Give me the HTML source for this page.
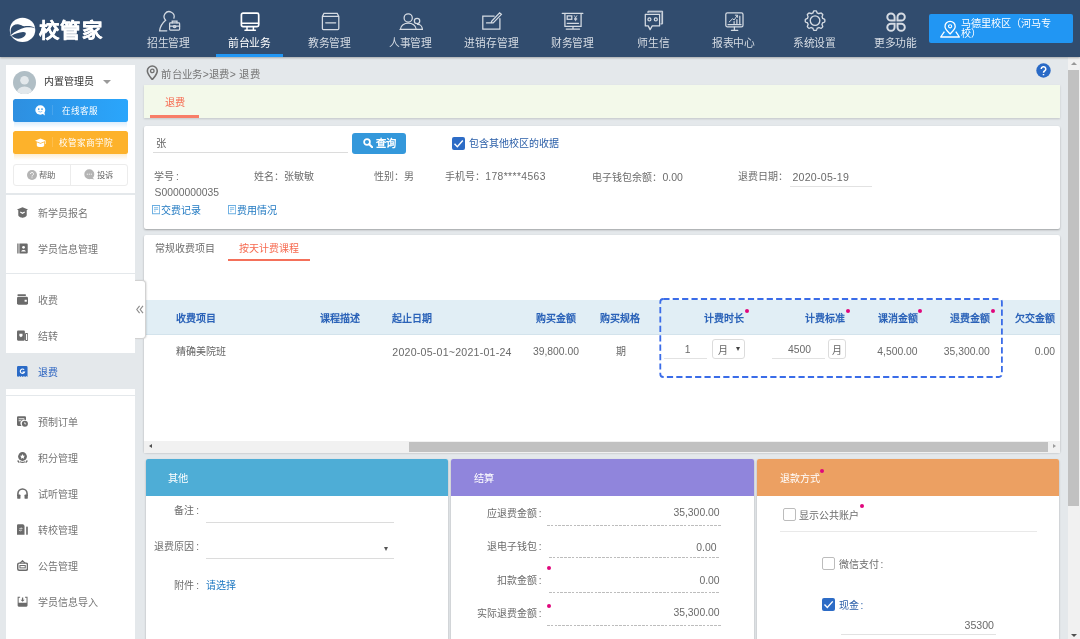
<!DOCTYPE html>
<html lang="zh-CN">
<head>
<meta charset="utf-8">
<title>退费</title>
<style>
*{box-sizing:border-box;margin:0;padding:0}
html,body{width:1080px;height:639px;overflow:hidden}
body{font-family:"Liberation Sans",sans-serif;background:#e4e8eb;color:#555;font-size:10.5px;position:relative}
#wrap{position:absolute;left:0;top:0;width:1080px;height:639px;overflow:hidden;will-change:transform}
.abs{position:absolute}
i{font-style:normal;margin-left:1.8px}
/* ---------- top nav ---------- */
#nav{position:absolute;left:0;top:0;width:1080px;height:57px;background:#314c6e;box-shadow:0 1px 2px rgba(0,0,0,.28);z-index:3}
#logo-txt{position:absolute;left:38.8px;top:15.8px;font-size:20.4px;line-height:30px;font-weight:bold;color:#fff;letter-spacing:1.6px;-webkit-text-stroke:0.35px #fff}
.ni{position:absolute;top:0;width:67px;height:57px;text-align:center;color:#d5dbe3;font-size:10.8px}
.ni svg{position:absolute;left:50%;top:9px;margin-left:-12px;width:24px;height:24px;fill:none;stroke:#d5dbe3;stroke-width:1.25;stroke-linecap:round}
.ni span{position:absolute;left:-10px;right:-10px;top:36.7px;line-height:13px;white-space:nowrap;letter-spacing:-.2px}
.ni.on{color:#fff;border-bottom:3px solid #2196f3}
.ni.on svg{stroke:#fff}
#campus{position:absolute;left:928.7px;top:14px;width:144px;height:29px;background:#2196f3;color:#fff;font-size:10.1px;line-height:10.3px;border-radius:2px}
#campus span{position:absolute;left:32.2px;top:5px;width:100px}
/* ---------- sidebar ---------- */
#side{position:absolute;left:6px;top:65px;width:129px;height:580px;background:#fff}
.sb{position:absolute;left:7px;width:115px;height:23px;color:#fff;font-size:8.6px;line-height:23px;border-radius:2.5px;white-space:nowrap}
.mi{position:absolute;left:0;width:129px;height:36px;line-height:37.6px;font-size:10px;color:#757575;padding-left:32px;white-space:nowrap}
.mi svg{position:absolute;left:11px;top:11.7px;width:11px;height:11px;fill:currentColor;color:#6b6b6b}
.mi.on{color:#2a62c0}
.mi.on svg{color:#2a6ac6}
.sep{position:absolute;left:0;width:129px;height:1px;background:#e4e8eb}
/* ---------- main ---------- */
.card{position:absolute;background:#fff;box-shadow:0 1px 2px rgba(0,0,0,.3);border-radius:2px}
.lbl{position:absolute;white-space:nowrap;font-size:10px;line-height:14px;color:#6c6c6c}
.th{position:absolute;white-space:nowrap;font-size:10px;line-height:14px;color:#2a62b8;font-weight:bold}
.td{position:absolute;white-space:nowrap;font-size:10.35px;line-height:14px;color:#6a6a6a}
.dot{position:absolute;width:4px;height:4px;border-radius:50%;background:#e0067c}
.ph{position:absolute;left:0;top:0;right:0;height:37px;border-radius:2px 2px 0 0;color:#fff;font-size:10.5px;line-height:37px;padding-left:23px}
.ul{position:absolute;height:1px;background:#ddd}
.dl{position:absolute;height:1px;background:repeating-linear-gradient(90deg,#bdbdbd 0,#bdbdbd 2.6px,transparent 2.6px,transparent 3.8px)}
.cb{position:absolute;width:12px;height:12px;border:1.3px solid #bcbcbc;border-radius:2px;background:#fff}
.cb.on{background:#2d6cc6;border:0}
.cb.on svg{position:absolute;left:0;top:0;width:100%;height:100%}
</style>
</head>
<body>
<div id="wrap">
<!-- NAV -->
<div id="nav">
  <svg class="abs" style="left:6px;top:14px" width="34" height="32" viewBox="0 0 679 639"><ellipse cx="330" cy="318" rx="255" ry="243" fill="#fff"/><path d="M70,440L118,408L126,424Z" fill="#fff"/><path d="M97,300C115,245 170,203 240,206C300,210 325,247 365,246C430,238 530,238 592,288C540,264 440,258 380,272C280,296 175,358 97,420C92,380 90,340 97,300Z" fill="#314c6e"/><path d="M108,432C180,396 260,370 340,360C380,358 400,375 396,400C385,445 320,492 250,495C190,492 140,462 108,432Z" fill="#314c6e"/></svg>
  <div id="logo-txt">校管家</div>
  <div class="ni" style="left:135px"><svg viewBox="0 0 24 24"><path d="M16.9,9.2A5,5 0 1 0 8.6,11.2C6.5,13 3.2,16.5 2.6,21.8H9.8"/><rect x="12.6" y="13.9" width="10" height="7.2" rx="0.8"/><path d="M15.2,13.9V12.2H20V13.9M12.6,17.1H22.6"/><ellipse cx="17.6" cy="17.5" rx="1.4" ry="1"/></svg><span>招生管理</span></div>
  <div class="ni on" style="left:216px"><svg viewBox="0 0 24 24"><rect x="3.4" y="4.1" width="17.3" height="13.6" rx="1.6" stroke-width="1.7"/><path d="M3.6,14.3H20.6M9,18V21.2M15.4,18V21.2M7,21.3H17.4" stroke-width="1.5"/></svg><span>前台业务</span></div>
  <div class="ni" style="left:296px"><svg viewBox="0 0 24 24"><path d="M4.4,7.4L6,4.3H19.2L20.8,7.4V19.6A1,1 0 0 1 19.8,20.6H5.4A1,1 0 0 1 4.4,19.6ZM4.4,7.4H20.8M7.7,13.8H17.7"/></svg><span>教务管理</span></div>
  <div class="ni" style="left:377px"><svg viewBox="0 0 24 24"><circle cx="9.2" cy="8.9" r="4.1"/><path d="M1.4,20.3C1.8,12.2 16.8,12.2 17.2,20.3M1,20.4H23.6M23.4,20.3C23.2,17.2 21,15.3 18.6,15.4"/><circle cx="18.05" cy="12" r="2.7"/></svg><span>人事管理</span></div>
  <div class="ni" style="left:458px"><svg viewBox="0 0 24 24"><path d="M14.2,7.1H2.8V20.1H19.9V9.6"/><path d="M6.5,13.9H13.2L21.4,5.4L19.6,3.8L11.6,12.4L11.2,14"/></svg><span>进销存管理</span></div>
  <div class="ni" style="left:539px"><svg viewBox="0 0 24 24"><path d="M1.2,4.3H21.9M3.9,4.5V17.4H20.1V4.5M12,17.6V20M5.2,20.1H18.6M6.2,14.3H17.5"/><rect x="6.2" y="6.9" width="4.6" height="3.4"/><path d="M13.3,6.6L14.6,8.8L15.9,6.6M14.6,8.8V11.8M13.4,9.4H15.8M13.4,10.6H15.8" stroke-width="0.8"/></svg><span>财务管理</span></div>
  <div class="ni" style="left:620px"><svg viewBox="0 0 24 24"><path d="M3.3,5.3H17.6V16.9H10.2L8.1,20.6L6.2,16.9H3.3Z" stroke-linejoin="round"/><path d="M6,3.6V2.2H20.6V14.9H18.9" stroke-width="1"/><path d="M6.2,2.9H19.8V14.6" stroke-width="1.6" opacity=".55"/><circle cx="7.4" cy="10.4" r="1.5"/><circle cx="13.8" cy="10.4" r="1.5"/></svg><span>师生信</span></div>
  <div class="ni" style="left:700px"><svg viewBox="0 0 24 24"><rect x="3.8" y="3.9" width="17.2" height="14" rx="1.6"/><path d="M12.4,18V21M9.4,21.3H15.8M6,15.7H19"/><path d="M12.1,12.7V14.6M14.9,10.5V14.6M17.8,7.2V14.6" stroke-width="1.2"/><path d="M7.2,13L10.5,9.8L12.2,10.9L15.3,6.5M13.3,6.2H15.6V8.4" stroke-width="1"/></svg><span>报表中心</span></div>
  <div class="ni" style="left:781px"><svg viewBox="0 0 24 24"><path d="M12.05,1.80L12.43,1.81L12.82,1.83L13.20,1.87L13.51,2.37L13.78,2.92L14.00,3.48L14.19,4.00L14.49,4.09L14.78,4.19L15.07,4.30L15.36,4.43L15.64,4.56L15.91,4.71L16.41,4.48L16.97,4.24L17.55,4.04L18.12,3.90L18.41,4.15L18.70,4.40L18.98,4.67L19.25,4.95L19.50,5.24L19.75,5.53L19.61,6.10L19.41,6.68L19.17,7.24L18.94,7.74L19.09,8.01L19.22,8.29L19.35,8.58L19.46,8.87L19.56,9.16L19.65,9.46L20.17,9.65L20.73,9.87L21.28,10.14L21.78,10.45L21.82,10.83L21.84,11.22L21.85,11.60L21.84,11.98L21.82,12.37L21.78,12.75L21.28,13.06L20.73,13.33L20.17,13.55L19.65,13.74L19.56,14.04L19.46,14.33L19.35,14.62L19.22,14.91L19.09,15.19L18.94,15.46L19.17,15.96L19.41,16.52L19.61,17.10L19.75,17.67L19.50,17.96L19.25,18.25L18.98,18.53L18.70,18.80L18.41,19.05L18.12,19.30L17.55,19.16L16.97,18.96L16.41,18.72L15.91,18.49L15.64,18.64L15.36,18.77L15.07,18.90L14.78,19.01L14.49,19.11L14.19,19.20L14.00,19.72L13.78,20.28L13.51,20.83L13.20,21.33L12.82,21.37L12.43,21.39L12.05,21.40L11.67,21.39L11.28,21.37L10.90,21.33L10.59,20.83L10.32,20.28L10.10,19.72L9.91,19.20L9.61,19.11L9.32,19.01L9.03,18.90L8.74,18.77L8.46,18.64L8.19,18.49L7.69,18.72L7.13,18.96L6.55,19.16L5.98,19.30L5.69,19.05L5.40,18.80L5.12,18.53L4.85,18.25L4.60,17.96L4.35,17.67L4.49,17.10L4.69,16.52L4.93,15.96L5.16,15.46L5.01,15.19L4.88,14.91L4.75,14.62L4.64,14.33L4.54,14.04L4.45,13.74L3.93,13.55L3.37,13.33L2.82,13.06L2.32,12.75L2.28,12.37L2.26,11.98L2.25,11.60L2.26,11.22L2.28,10.83L2.32,10.45L2.82,10.14L3.37,9.87L3.93,9.65L4.45,9.46L4.54,9.16L4.64,8.87L4.75,8.58L4.88,8.29L5.01,8.01L5.16,7.74L4.93,7.24L4.69,6.68L4.49,6.10L4.35,5.53L4.60,5.24L4.85,4.95L5.12,4.67L5.40,4.40L5.69,4.15L5.98,3.90L6.55,4.04L7.13,4.24L7.69,4.48L8.19,4.71L8.46,4.56L8.74,4.43L9.03,4.30L9.32,4.19L9.61,4.09L9.91,4.00L10.10,3.48L10.32,2.92L10.59,2.37L10.90,1.87L11.28,1.83L11.67,1.81Z" stroke-linejoin="round" stroke-width="1.35"/><circle cx="12.05" cy="11.6" r="4.8" stroke-width="1.35"/></svg><span>系统设置</span></div>
  <div class="ni" style="left:862px"><svg viewBox="0 0 24 24"><path d="M10.6,11.55H6.95A3.65,3.55 0 1 1 10.6,8ZM13.5,11.55V8A3.65,3.55 0 1 1 17.15,11.55ZM10.6,14.7V18.25A3.65,3.55 0 1 1 6.95,14.7ZM13.5,14.7H17.15A3.65,3.55 0 1 1 13.5,18.25Z" stroke-width="2" stroke-linejoin="miter"/></svg><span>更多功能</span></div>
  <div id="campus"><svg class="abs" style="left:10px;top:5.5px" width="22" height="19" viewBox="0 0 22 19"><path d="M11.1,1.3A5.1,5.1 0 0 1 16.2,6.4C16.2,9.4 12.6,12.2 11.1,13.9C9.6,12.2 6,9.4 6,6.4A5.1,5.1 0 0 1 11.1,1.3Z" fill="none" stroke="#fff" stroke-width="1.3"/><circle cx="11.1" cy="6.3" r="1.6" fill="none" stroke="#fff" stroke-width="1.1"/><path d="M5.4,11.6L1.7,17H20.4L16.8,11.6" fill="none" stroke="#fff" stroke-width="1.3" stroke-linejoin="round"/></svg><span>马德里校区（河马专校）</span></div>
</div>

<!-- SIDEBAR -->
<div id="side">
  <svg class="abs" style="left:7px;top:5.5px" width="23" height="23" viewBox="0 0 23 23"><defs><clipPath id="av"><circle cx="11.5" cy="11.5" r="11.5"/></clipPath></defs><circle cx="11.5" cy="11.5" r="11.5" fill="#b0bec5"/><g clip-path="url(#av)"><circle cx="11.5" cy="9.2" r="4.3" fill="#e3e8eb"/><ellipse cx="11.5" cy="21.5" rx="7.6" ry="6" fill="#e3e8eb"/></g></svg>
  <div class="abs" style="left:38px;top:10px;font-size:10px;line-height:14px;color:#333">内置管理员</div>
  <div class="abs" style="left:97px;top:15px;width:0;height:0;border-left:4.3px solid transparent;border-right:4.3px solid transparent;border-top:4.6px solid #9a9a9a"></div>
  <div class="abs" style="left:8px;top:55px;width:113px;height:8px;background:linear-gradient(#cfe7fb,#fff)"></div>
  <div class="sb" style="top:34px;background:linear-gradient(90deg,#2e8fe0,#2aa6fc)">
    <svg class="abs" style="left:21.6px;top:5.8px" width="11" height="11" viewBox="0 0 11 11"><ellipse cx="5.3" cy="5" rx="5" ry="4.7" fill="#fff"/><path d="M7.2,8.6L9.9,10.5L9.4,7.2Z" fill="#fff"/><circle cx="3.7" cy="4.1" r="0.85" fill="#2d97ea"/><circle cx="7" cy="4.1" r="0.85" fill="#2d97ea"/><path d="M3.4,6.3Q5.3,7.8 7.3,6.3" fill="none" stroke="#2d97ea" stroke-width="0.55"/></svg>
    <div class="abs" style="left:39px;top:6px;width:1px;height:10px;background:rgba(255,255,255,.13)"></div>
    <span class="abs" style="left:49.3px;top:0.7px">在线客服</span>
  </div>
  <div class="abs" style="left:8px;top:87px;width:113px;height:8px;background:linear-gradient(#fde7c0,#fff)"></div>
  <div class="sb" style="top:66px;background:#fdb22b">
    <svg class="abs" style="left:22px;top:6.5px" width="11" height="10" viewBox="0 0 11 10"><path d="M0,2.7L5.5,0.4L11,2.7L5.5,5Z" fill="#fff"/><path d="M1.8,4.2V7.4C1.8,9.6 9.2,9.6 9.2,7.4V4.2L5.5,5.8Z" fill="#fff"/><path d="M10.4,3V6" stroke="#fff" stroke-width="0.7"/></svg>
    <div class="abs" style="left:39px;top:6px;width:1px;height:10px;background:rgba(255,255,255,.16)"></div>
    <span class="abs" style="left:46px;top:0.6px">校管家商学院</span>
  </div>
  <div class="abs" style="left:7px;top:99px;width:115px;height:22px;border:1px solid #ececec;border-radius:3px;font-size:8.4px;line-height:20px;color:#666">
    <div class="abs" style="left:55.6px;top:0;width:1px;height:20px;background:#ececec"></div>
    <svg class="abs" style="left:12.6px;top:4.8px" width="10" height="10" viewBox="0 0 10 10"><circle cx="5" cy="5" r="5" fill="#b4b4b4"/><path d="M3.5,4A1.5,1.5 0 1 1 5.6,5.3C5.1,5.6 5,5.9 5,6.5M5,7.4V8.2" fill="none" stroke="#fff" stroke-width="0.9"/></svg>
    <span class="abs" style="left:25.4px;top:0.3px">帮助</span>
    <svg class="abs" style="left:69.6px;top:4.3px" width="11" height="11" viewBox="0 0 11 11"><path d="M5.3,0.2A5,5 0 1 1 5.3,10.2A5,5 0 0 1 5.3,0.2ZM8.4,8.4L10.4,10.6L7,9.8Z" fill="#b4b4b4"/><path d="M2.8,5.2H3.8M4.8,5.2H5.8M6.8,5.2H7.8" stroke="#fff" stroke-width="1"/></svg>
    <span class="abs" style="left:83.2px;top:0.3px">投诉</span>
  </div>
  <div class="sep" style="top:128px;height:2px"></div>
  <div class="abs" style="left:0;top:288.2px;width:129px;height:36px;background:#e4e8eb"></div>
  <div class="mi" style="top:130px"><svg viewBox="0 0 12 12"><path d="M0,2.7L6,0.3L12,2.7L10.6,3.5V9C10.6,10.6 7,11.8 6,11.8C5,11.8 1.4,10.6 1.4,9V3.5Z"/><path d="M3.6,5.4L6,6.9L8.4,5.4" fill="none" stroke="#fff" stroke-width="1.2"/></svg>新学员报名</div>
  <div class="mi" style="top:166px"><svg viewBox="0 0 12 12"><path d="M0.3,0.5H1.7V11.5H0.3ZM2.6,0.5H10.6A1.1,1.1 0 0 1 11.7,1.6V10.4A1.1,1.1 0 0 1 10.6,11.5H2.6Z"/><circle cx="7.1" cy="4.7" r="1.5" fill="#fff"/><path d="M4.5,9.3C4.5,6.9 9.7,6.9 9.7,9.3Z" fill="#fff"/></svg>学员信息管理</div>
  <div class="mi" style="top:217px"><svg viewBox="0 0 12 12"><rect x="0.4" y="0.4" width="9.4" height="1.7" rx="0.8"/><rect x="0" y="3.1" width="12" height="8.6" rx="1.6"/><rect x="8.3" y="6.3" width="2.4" height="2.1" fill="#fff"/></svg>收费</div>
  <div class="mi" style="top:253px"><svg viewBox="0 0 12 12"><rect x="0" y="0.6" width="8.6" height="11" rx="1.2"/><path d="M2.6,4.2H6V6.6L4.3,8L2.6,6.6Z" fill="#fff"/><rect x="9.2" y="3.8" width="2.5" height="7.6" rx="0.8" fill="none" stroke="currentColor" stroke-width="1.1"/></svg>结转</div>
  <div class="mi on" style="top:289px"><svg viewBox="0 0 12 12"><path d="M1.4,0H10.1A1.4,1.4 0 0 1 11.5,1.4V12L10.2,11L8.9,12L7.6,11L6.3,12L5,11L3.7,12L2.4,11L1.2,12L0,11V1.4A1.4,1.4 0 0 1 1.4,0Z"/><path d="M7.8,4.1A2.4,2.4 0 1 0 8.2,6.6H6" fill="none" stroke="#fff" stroke-width="1.2"/></svg>退费</div>
  <div class="mi" style="top:339px"><svg viewBox="0 0 12 12"><path d="M1.2,0.2H8.6A1.2,1.2 0 0 1 9.8,1.4V4.5A4,4 0 0 0 5,10.8H1.2A1.2,1.2 0 0 1 0,9.6V1.4A1.2,1.2 0 0 1 1.2,0.2Z"/><path d="M1.8,3H8M1.8,5.2H4.6" stroke="#fff" stroke-width="1" fill="none"/><circle cx="8.6" cy="8.4" r="3.3"/><path d="M8.5,6.8V8.6H10" stroke="#fff" stroke-width="0.9" fill="none"/></svg>预制订单</div>
  <div class="mi" style="top:375px"><svg viewBox="0 0 12 12"><circle cx="6" cy="4.9" r="4.8"/><path d="M6,2.2L6.9,4L8.8,4.2L7.4,5.5L7.8,7.4L6,6.5L4.2,7.4L4.6,5.5L3.2,4.2L5.1,4Z" fill="#fff"/><path d="M0.7,9.3L2.5,11.5M11.3,9.3L9.5,11.5" fill="none" stroke="currentColor" stroke-width="1.4"/><path d="M3.2,10.7C5,11.5 7,11.5 8.8,10.7" fill="none" stroke="currentColor" stroke-width="1.1"/></svg>积分管理</div>
  <div class="mi" style="top:411px"><svg viewBox="0 0 12 12"><path d="M1,8.6V6A5,5 0 0 1 11,6V8.6" fill="none" stroke="currentColor" stroke-width="1.7"/><rect x="0.2" y="7" width="3.6" height="4.8" rx="1"/><rect x="8.2" y="7" width="3.6" height="4.8" rx="1"/></svg>试听管理</div>
  <div class="mi" style="top:447px"><svg viewBox="0 0 12 12"><path d="M1.2,0.4H6.8L8.2,1.8V11.8H0V1.6A1.2,1.2 0 0 1 1.2,0.4Z"/><path d="M2.6,5H5.6M2.6,6.8H5.6M4.6,3.8L5.8,5M3.6,8L2.4,6.8" stroke="#fff" stroke-width="0.7" fill="none"/><rect x="10" y="2.6" width="1.8" height="9.2" rx="0.7"/></svg>转校管理</div>
  <div class="mi" style="top:483px"><svg viewBox="0 0 12 12"><rect x="0.8" y="3.4" width="10.6" height="7.8" rx="1.6" fill="none" stroke="currentColor" stroke-width="1.6"/><path d="M3.2,3.4L6,0.8L8.8,3.4" fill="none" stroke="currentColor" stroke-width="1.3"/><rect x="3.2" y="6" width="5.8" height="2.6" fill="none" stroke="currentColor" stroke-width="1.1"/></svg>公告管理</div>
  <div class="mi" style="top:519px"><svg viewBox="0 0 12 12"><path d="M0.7,0.8H3.4V1.9H1.8V7.4H10.4V1.9H8.8V0.8H11.5V10.4A1.2,1.2 0 0 1 10.3,11.6H1.9A1.2,1.2 0 0 1 0.7,10.4Z"/><path d="M5.4,1.6H6.8V4H8.4L6.1,6.4L3.8,4H5.4Z"/></svg>学员信息导入</div>
  <div class="sep" style="top:208px"></div>
  <div class="sep" style="top:330px"></div>
</div>
<div class="abs" style="left:135px;top:280.3px;width:11px;height:59px;background:#fff;border-radius:0 4px 4px 0;border:1px solid #d2d2d2;border-left:0;box-shadow:1px 0 1.5px rgba(0,0,0,.1);z-index:5">
  <svg class="abs" style="left:1.2px;top:24px" width="8" height="9" viewBox="0 0 8 9"><path d="M3.6,0.8L0.8,4.5L3.6,8.2M7,0.8L4.2,4.5L7,8.2" fill="none" stroke="#8c8c8c" stroke-width="1.15"/></svg>
</div>

<!-- MAIN -->
<div id="main">
<svg class="abs" style="left:145.8px;top:64.6px" width="12.6" height="15.8" viewBox="0 0 12 15"><path d="M6,1A4.7,4.7 0 0 1 10.7,5.7C10.7,8.8 7.4,12 6,13.9C4.6,12 1.3,8.8 1.3,5.7A4.7,4.7 0 0 1 6,1Z" fill="none" stroke="#707070" stroke-width="1.5"/><circle cx="6" cy="5.6" r="1.7" fill="none" stroke="#707070" stroke-width="1.3"/></svg>
<div class="lbl" style="left:161.3px;top:67.9px;font-size:10.4px;color:#757575;letter-spacing:.35px">前台业务&gt;退费&gt; 退费</div>
<svg class="abs" style="left:1036.4px;top:63.3px" width="15" height="15" viewBox="0 0 15 15"><circle cx="7.5" cy="7.5" r="7.2" fill="#2a6ac6"/><path d="M5.2,6A2.3,2.3 0 1 1 8.6,8C7.8,8.5 7.5,8.9 7.5,9.7M7.5,11V12.3" fill="none" stroke="#fff" stroke-width="1.5"/></svg>
<div class="abs" style="left:144px;top:85px;width:916px;height:33px;background:#f3f9ea;box-shadow:0 1px 2px rgba(0,0,0,.15)"><div class="abs" style="left:6px;top:0;width:49px;height:33px;border-bottom:3px solid #f87e68;color:#f66a50;font-size:10.2px;line-height:35.2px;text-align:center">退费</div></div>
<div class="card" style="left:144px;top:125.5px;width:916px;height:103.5px"></div>
<div class="lbl" style="left:155.5px;top:137.2px;font-size:10.4px;color:#666">张</div>
<div class="ul" style="left:153px;top:151.5px;width:195px;background:#dcdcdc"></div>
<div class="abs" style="left:351.5px;top:132.6px;width:54.8px;height:21.8px;background:#3498db;border-radius:3px;color:#fff;font-weight:bold;font-size:10.3px;line-height:21.8px;white-space:nowrap"><svg class="abs" style="left:11px;top:5.5px" width="10" height="10" viewBox="0 0 10 10"><circle cx="4" cy="4" r="2.9" fill="none" stroke="#fff" stroke-width="1.7"/><path d="M6.2,6.2L9.2,9.2" stroke="#fff" stroke-width="2" stroke-linecap="round"/></svg><span class="abs" style="left:24px;top:0.3px">查询</span></div>
<div class="cb on" style="left:451.9px;top:136.6px;width:13.1px;height:13.2px"><svg viewBox="0 0 12 12"><path d="M2.3,6.1L4.9,8.8L9.9,3.1" fill="none" stroke="#fff" stroke-width="1.3"/></svg></div>
<div class="lbl" style="left:469.0px;top:137.2px;font-size:10px;color:#2a5ea8">包含其他校区的收据</div>
<div class="lbl" style="left:154.2px;top:170.1px;">学号<i>:</i></div>
<div class="lbl" style="left:253.8px;top:170.1px;">姓名：张敏敏</div>
<div class="lbl" style="left:373.8px;top:170.1px;">性别：男</div>
<div class="lbl" style="left:445.3px;top:170.1px;">手机号：<span style="font-size:10.3px;letter-spacing:.4px">178****4563</span></div>
<div class="lbl" style="left:592.4px;top:170.1px;">电子钱包余额：<span style="font-size:10.5px">0.00</span></div>
<div class="lbl" style="left:737.8px;top:170.1px;">退费日期：</div>
<div class="lbl" style="left:792.4px;top:170.1px;font-size:10.6px;color:#6a6a6a;letter-spacing:.25px">2020-05-19</div>
<div class="ul" style="left:790px;top:186px;width:82px;background:#e2e2e2"></div>
<div class="lbl" style="left:154.6px;top:185.6px;font-size:10.35px">S0000000035</div>
<svg class="abs" style="left:152.2px;top:205.3px" width="8.2" height="9.4" viewBox="0 0 9 10"><path d="M0.5,0.5H8.5V9.5H0.5Z" fill="none" stroke="#6aaee2" stroke-width="1.1"/><path d="M2.2,2.8H6.8M2.2,4.6H6.8M2.2,6.6H4" stroke="#6aaee2" stroke-width="0.9"/></svg>
<div class="lbl" style="left:161.2px;top:204.1px;color:#1f78c1">交费记录</div>
<svg class="abs" style="left:227.8px;top:205.3px" width="8.2" height="9.4" viewBox="0 0 9 10"><path d="M0.5,0.5H8.5V9.5H0.5Z" fill="none" stroke="#6aaee2" stroke-width="1.1"/><path d="M2.2,2.8H6.8M2.2,4.6H6.8M2.2,6.6H4" stroke="#6aaee2" stroke-width="0.9"/></svg>
<div class="lbl" style="left:236.6px;top:204.1px;color:#1f78c1">费用情况</div>
<div class="card" style="left:144px;top:234.8px;width:916px;height:217.7px"></div>
<div class="lbl" style="left:155.0px;top:241.5px;font-size:10px">常规收费项目</div>
<div class="lbl" style="left:238.8px;top:241.5px;font-size:10px;color:#f66a50">按天计费课程</div>
<div class="abs" style="left:227.9px;top:259.2px;width:81.8px;height:2px;background:#f4705a"></div>
<div class="abs" style="left:144px;top:300px;width:916px;height:34px;background:#e1eef5"></div>
<div class="abs" style="left:144px;top:333.5px;width:916px;height:1px;background:#d3e3ec"></div>
<div class="th" style="left:176.0px;top:311.6px;">收费项目</div>
<div class="th" style="left:320.0px;top:311.6px;">课程描述</div>
<div class="th" style="left:392.0px;top:311.6px;">起止日期</div>
<div class="th" style="left:535.7px;top:311.6px;">购买金额</div>
<div class="th" style="left:600.3px;top:311.6px;">购买规格</div>
<div class="th" style="left:704.4px;top:311.6px;">计费时长</div>
<div class="th" style="left:805.0px;top:311.6px;">计费标准</div>
<div class="th" style="left:877.5px;top:311.6px;">课消金额</div>
<div class="th" style="left:949.6px;top:311.6px;">退费金额</div>
<div class="th" style="left:1014.8px;top:311.6px;">欠交金额</div>
<div class="dot" style="left:745.0px;top:309.1px"></div>
<div class="dot" style="left:846.1px;top:309.1px"></div>
<div class="dot" style="left:918.0px;top:309.1px"></div>
<div class="dot" style="left:990.5px;top:309.1px"></div>
<div class="td" style="left:176.0px;top:345.4px;font-size:10px;color:#666">精确美院班</div>
<div class="td" style="left:392.3px;top:344.6px;font-size:10.6px;letter-spacing:.23px">2020-05-01~2021-01-24</div>
<div class="td" style="right:501.0px;top:344.6px;">39,800.00</div>
<div class="td" style="left:615.5px;top:345.4px;font-size:10px;color:#666">期</div>
<div class="td" style="left:684.8px;top:343.1px;">1</div>
<div class="ul" style="left:664.4px;top:358.3px;width:43px;background:#e2e2e2"></div>
<div class="abs" style="left:712px;top:338.6px;width:32.7px;height:20.8px;border:1px solid #dcdcdc;border-radius:3px;background:#fff"></div>
<div class="td" style="left:718.3px;top:343.6px;font-size:10px;color:#666">月</div>
<div class="abs" style="left:735.8px;top:347px;width:0;height:0;border-left:2.4px solid transparent;border-right:2.4px solid transparent;border-top:4px solid #444"></div>
<div class="td" style="left:787.9px;top:343.1px;">4500</div>
<div class="ul" style="left:772.4px;top:358.3px;width:53px;background:#e2e2e2"></div>
<div class="abs" style="left:828.2px;top:338.6px;width:17.6px;height:20.8px;border:1px solid #dcdcdc;border-radius:3px;background:#fff"></div>
<div class="td" style="left:832.0px;top:343.6px;font-size:10px;color:#666">月</div>
<div class="td" style="right:162.4px;top:344.6px;">4,500.00</div>
<div class="td" style="right:90.2px;top:344.6px;">35,300.00</div>
<div class="td" style="right:25.1px;top:344.6px;">0.00</div>
<svg class="abs" style="left:657px;top:296px" width="350" height="84" viewBox="0 0 350 84"><rect x="3.3" y="3" width="341.6" height="78" rx="3" fill="none" stroke="#3a6ce8" stroke-width="1.8" stroke-dasharray="6.2 3.2"/></svg>
<div class="abs" style="left:144px;top:440.5px;width:916px;height:12px;background:#f1f1f1"><div class="abs" style="left:265px;top:1px;width:639px;height:10.2px;background:#c1c1c1"></div><div class="abs" style="left:4.5px;top:3.6px;width:0;height:0;border-top:2.7px solid transparent;border-bottom:2.7px solid transparent;border-right:3.2px solid #505050"></div><div class="abs" style="left:909px;top:3.6px;width:0;height:0;border-top:2.7px solid transparent;border-bottom:2.7px solid transparent;border-left:3.2px solid #9c9c9c"></div></div>
<div class="card" style="left:145.7px;top:458.7px;width:302.1px;height:190px"><div class="ph" style="background:#4eadd6"></div></div>
<div class="card" style="left:450.8px;top:458.7px;width:303.4px;height:190px"><div class="ph" style="background:#9085dc"></div></div>
<div class="card" style="left:756.6px;top:458.7px;width:302.6px;height:190px"><div class="ph" style="background:#eca062"></div></div>
<div class="lbl" style="left:168.3px;top:471.9px;color:#fff;font-size:10.2px">其他</div>
<div class="lbl" style="left:474.2px;top:471.9px;color:#fff;font-size:10.2px">结算</div>
<div class="lbl" style="left:779.6px;top:472.2px;color:#fff;font-size:10px">退款方式</div>
<div class="dot" style="left:820.0px;top:469.1px"></div>
<div class="lbl" style="right:881.1px;top:503.5px;">备注<i>:</i></div>
<div class="ul" style="left:206px;top:521.8px;width:187.5px;background:#dcdcdc"></div>
<div class="lbl" style="right:881.1px;top:539.6px;">退费原因<i>:</i></div>
<div class="ul" style="left:206px;top:557.6px;width:187.5px;background:#dcdcdc"></div>
<div class="abs" style="left:384.3px;top:546.6px;width:0;height:0;border-left:2.7px solid transparent;border-right:2.7px solid transparent;border-top:4.6px solid #555"></div>
<div class="lbl" style="right:881.1px;top:578.9px;">附件<i>:</i></div>
<div class="lbl" style="left:206.0px;top:578.9px;color:#1f78c1">请选择</div>
<div class="lbl" style="right:538.4px;top:506.9px;">应退费金额<i>:</i></div>
<div class="lbl" style="right:360.4px;top:506.4px;font-size:10.4px;color:#6a6a6a">35,300.00</div>
<div class="dl" style="left:547.4px;top:525.0px;width:173.6px"></div>
<div class="lbl" style="right:538.4px;top:540.2px;">退电子钱包<i>:</i></div>
<div class="lbl" style="right:363.5px;top:540.8px;font-size:10.4px;color:#6a6a6a">0.00</div>
<div class="dl" style="left:548.8px;top:556.8px;width:171.0px"></div>
<div class="lbl" style="right:538.4px;top:573.5px;">扣款金额<i>:</i></div>
<div class="lbl" style="right:360.4px;top:573.5px;font-size:10.4px;color:#6a6a6a">0.00</div>
<div class="dl" style="left:548.8px;top:591.8px;width:171.0px"></div>
<div class="lbl" style="right:538.4px;top:606.7px;">实际退费金额<i>:</i></div>
<div class="lbl" style="right:360.4px;top:605.9px;font-size:10.4px;color:#6a6a6a">35,300.00</div>
<div class="dl" style="left:547.4px;top:624.8px;width:173.6px"></div>
<div class="dot" style="left:547.3px;top:566.2px"></div>
<div class="dot" style="left:547.3px;top:603.6px"></div>
<div class="cb" style="left:782.6px;top:507.9px;width:13px;height:13px"></div>
<div class="lbl" style="left:799.1px;top:508.5px;font-size:10px">显示公共账户</div>
<div class="dot" style="left:859.6px;top:503.8px"></div>
<div class="ul" style="left:779.6px;top:531px;width:257px;background:#e9e9e9"></div>
<div class="cb" style="left:822px;top:557.3px;width:13px;height:13px"></div>
<div class="lbl" style="left:838.7px;top:557.7px;font-size:10px">微信支付<i>:</i></div>
<div class="cb on" style="left:822px;top:598.2px;width:13px;height:13px"><svg viewBox="0 0 12 12"><path d="M2.3,6.1L4.9,8.8L9.9,3.1" fill="none" stroke="#fff" stroke-width="1.3"/></svg></div>
<div class="lbl" style="left:838.7px;top:598.6px;font-size:10px;color:#2a5ea8">现金<i>:</i></div>
<div class="lbl" style="right:86.0px;top:617.8px;font-size:10.6px;color:#6a6a6a">35300</div>
<div class="ul" style="left:841px;top:633.9px;width:154.6px;background:#e2e2e2"></div>
</div>

<!-- page scrollbar -->
<div class="abs" id="vsb" style="left:1067.5px;top:57px;width:12.5px;height:582px;background:#f1f1f1">
  <div class="abs" style="left:0.8px;top:13px;width:10.7px;height:435.5px;background:#c1c1c1"></div>
  <div class="abs" style="left:3.2px;top:5px;width:0;height:0;border-left:3.1px solid transparent;border-right:3.1px solid transparent;border-bottom:3.5px solid #989898"></div>
  <div class="abs" style="left:3.2px;top:576.8px;width:0;height:0;border-left:3.1px solid transparent;border-right:3.1px solid transparent;border-top:3.5px solid #505050"></div>
</div>
</div>
</body>
</html>
